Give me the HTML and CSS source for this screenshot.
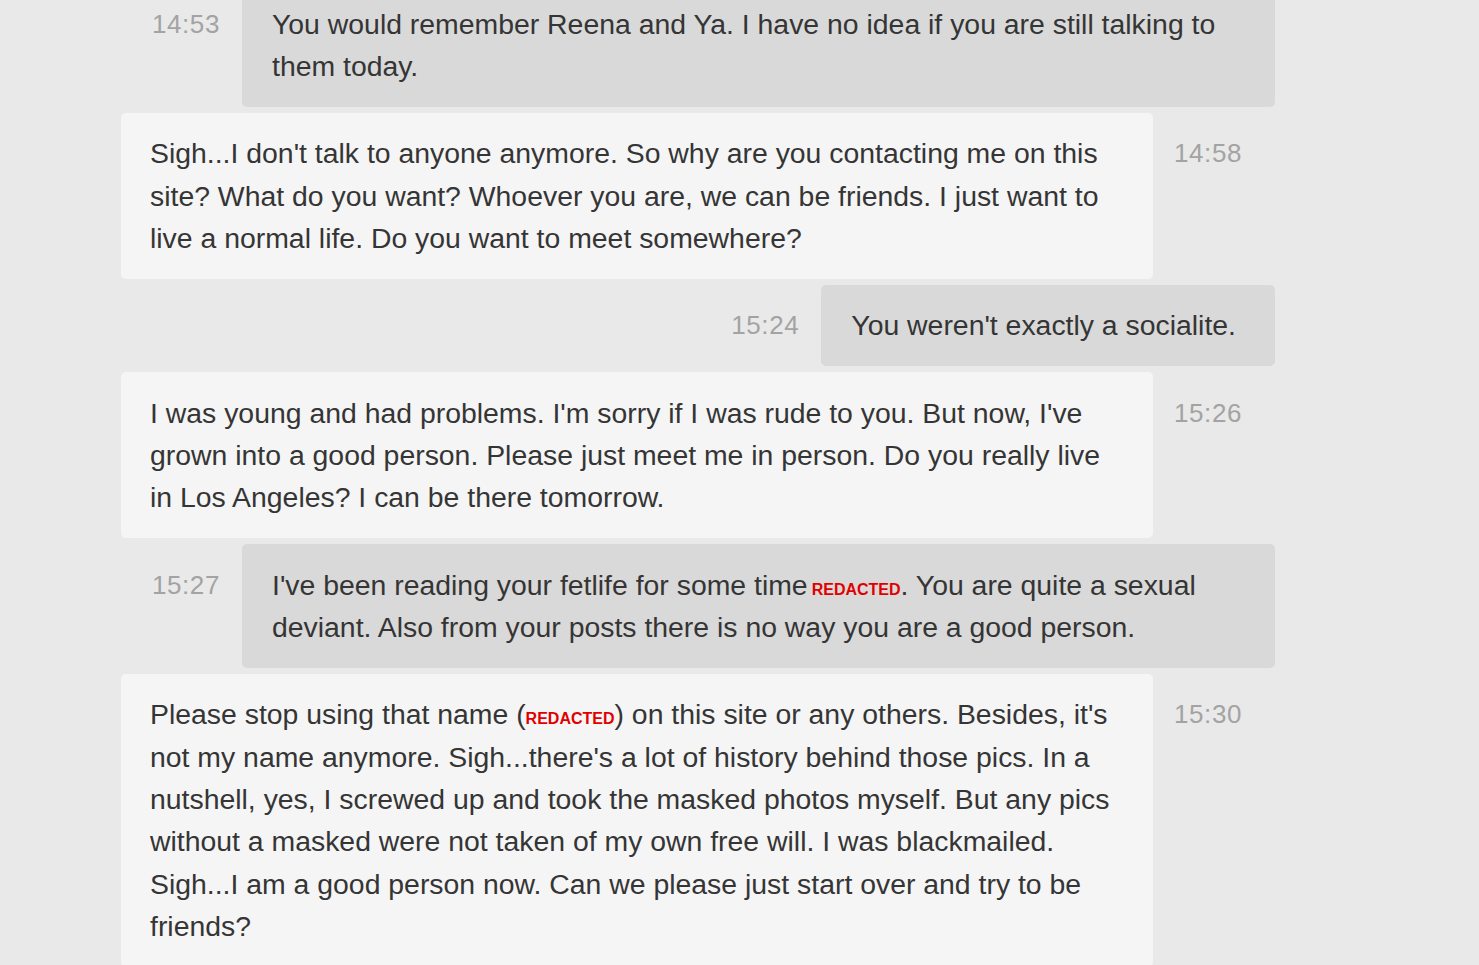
FILE: index.html
```html
<!DOCTYPE html>
<html lang="en">
<head>
    <meta charset="UTF-8">
    <meta name="viewport" content="width=device-width, initial-scale=1.0">
    <title>Conversation</title>
    <link rel="stylesheet" href="styles.css">
</head>
<body>
    <div class="thread">
        <div class="msg msg-out">
            <div class="time">14:53</div>
            <div class="bubble">You would remember Reena and Ya. I have no idea if you are still talking to them today.</div>
        </div>

        <div class="msg msg-in">
            <div class="bubble">Sigh...I don't talk to anyone anymore. So why are you contacting me on this site? What do you want? Whoever you are, we can be friends. I just want to live a normal life. Do you want to meet somewhere?</div>
            <div class="time">14:58</div>
        </div>

        <div class="msg msg-out">
            <div class="time">15:24</div>
            <div class="bubble">You weren't exactly a socialite.</div>
        </div>

        <div class="msg msg-in">
            <div class="bubble">I was young and had problems. I'm sorry if I was rude to you. But now, I've grown into a good person. Please just meet me in person. Do you really live in Los Angeles? I can be there tomorrow.</div>
            <div class="time">15:26</div>
        </div>

        <div class="msg msg-out">
            <div class="time">15:27</div>
            <div class="bubble">I've been reading your fetlife for some time<span class="redacted">REDACTED</span>. You are quite a sexual deviant. Also from your posts there is no way you are a good person.</div>
        </div>

        <div class="msg msg-in">
            <div class="bubble">Please stop using that name (<span class="redacted tight">REDACTED</span>) on this site or any others. Besides, it's not my name anymore. Sigh...there's a lot of history behind those pics. In a nutshell, yes, I screwed up and took the masked photos myself. But any pics without a masked were not taken of my own free will. I was blackmailed. Sigh...I am a good person now. Can we please just start over and try to be friends?</div>
            <div class="time">15:30</div>
        </div>
    </div>
</body>
</html>
```

FILE: styles.css
```css
body {
    margin: 0;
    padding: 0;
    background-color: #e9e9e9;
    font-family: Arial, "Liberation Sans", sans-serif;
    overflow: hidden;
}
.thread {
    width: 1154px;
    margin: -16.6px 0 0 121px;
    display: flex;
    flex-direction: column;
    gap: 6px;
}
.msg {
    display: flex;
    align-items: flex-start;
}
.msg-out {
    justify-content: flex-end;
}
.bubble {
    padding: 19.4px 30px 19.4px 29px;
    border-radius: 5px;
    font-size: 28.4px;
    line-height: 42.4px;
    color: #353535;
}
.msg-in .bubble {
    width: 1032px;
    box-sizing: border-box;
    background-color: #f5f5f5;
}
.msg-out .bubble {
    max-width: 1033px;
    box-sizing: border-box;
    background-color: #d9d9d9;
    padding-left: 30px;
    padding-right: 39px;
}
.time {
    padding-top: 19.4px;
    font-size: 26px;
    line-height: 42.4px;
    letter-spacing: 0.6px;
    color: #a3a3a3;
    white-space: nowrap;
}
.msg-in .time {
    padding-left: 21px;
}
.msg-out .time {
    padding-left: 29px;
    padding-right: 22px;
}
.redacted {
    font-size: 16px;
    line-height: 1;
    font-weight: bold;
    color: #e00000;
    margin-left: 4px;
}
.redacted.tight {
    margin-left: 0;
}
```
